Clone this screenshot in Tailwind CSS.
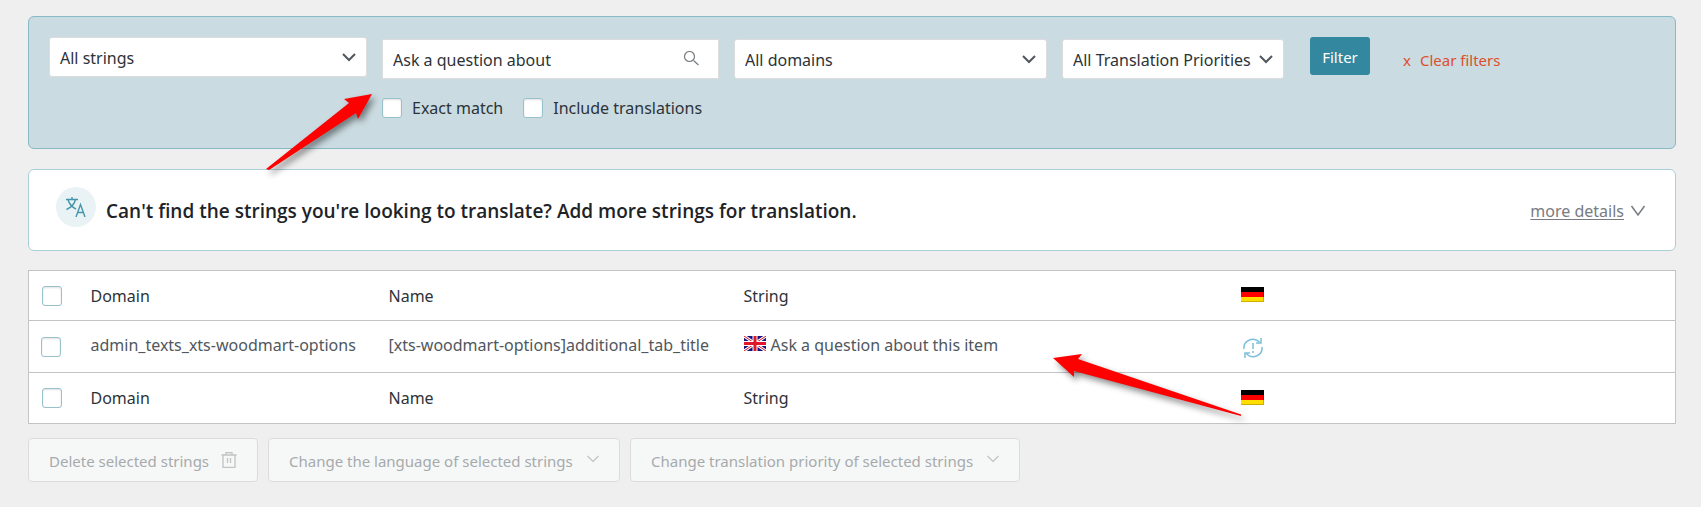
<!DOCTYPE html>
<html lang="en">
<head>
    <meta charset="UTF-8">
    <meta name="viewport" content="width=device-width, initial-scale=1.0">
    <title>String Translation</title>
    <script src="https://cdn.jsdelivr.net/npm/@tailwindcss/browser@4"></script>
</head>
<body class="relative min-h-screen overflow-x-hidden bg-[#efefef] pt-4 pr-[25px] pb-6 pl-7 font-['Noto_Sans',sans-serif] text-[16px] leading-6 text-[#2c3338]">
    <!-- FILTERS -->
    <form class="flex h-[133px] items-start rounded-md border border-[#87b9c6] bg-[#cadbe1] pt-5 pl-5">
        <div class="relative mr-[15px] w-[318px]">
            <select aria-label="Status" class="h-10 w-full appearance-none rounded-[3px] border border-[#dcdcde] bg-white pt-0.5 pl-[10px]">
                <option>All strings</option>
            </select>
            <svg class="pointer-events-none absolute top-3 right-2.5 size-4" viewBox="0 0 16 16" fill="none" stroke="#50575e" stroke-width="2"><path d="M2 5l6 6 6-6"/></svg>
        </div>

        <div class="mt-0.5 mr-[15px] w-[337px]">
            <div class="relative">
                <input type="text" aria-label="Search" value="Ask a question about" class="h-10 w-full border border-[#dcdcde] bg-white pt-0.5 pl-[10px]">
                <svg class="pointer-events-none absolute top-3 right-5 size-4" viewBox="0 0 16 16" fill="none" stroke="#787c82" stroke-width="1.200"><circle cx="6.500" cy="5.500" r="5"/><path d="M10.500 9.500l5 4.500"/></svg>
            </div>
            <div class="mt-[17px] flex whitespace-nowrap">
                <label class="mr-5 flex items-center gap-2.5">
                    <input type="checkbox" class="size-5 appearance-none rounded-[3px] border border-[#98c1cc] bg-white shadow-[inset_0_1px_2px_rgba(0,0,0,0.12)]">Exact match
                </label>
                <label class="flex items-center gap-2.5">
                    <input type="checkbox" class="size-5 appearance-none rounded-[3px] border border-[#98c1cc] bg-white shadow-[inset_0_1px_2px_rgba(0,0,0,0.12)]">Include translations
                </label>
            </div>
        </div>

        <div class="relative mt-0.5 mr-[15px] w-[313px]">
            <select aria-label="Domain" class="h-10 w-full appearance-none rounded-[3px] border border-[#dcdcde] bg-white pt-0.5 pl-[10px]">
                <option>All domains</option>
            </select>
            <svg class="pointer-events-none absolute top-3 right-2.5 size-4" viewBox="0 0 16 16" fill="none" stroke="#50575e" stroke-width="2"><path d="M2 5l6 6 6-6"/></svg>
        </div>

        <div class="relative mt-0.5 mr-[26px] w-[222px]">
            <select aria-label="Priority" class="h-10 w-full appearance-none rounded-[3px] border border-[#dcdcde] bg-white pt-0.5 pl-[10px]">
                <option>All Translation Priorities</option>
            </select>
            <svg class="pointer-events-none absolute top-3 right-2.5 size-4" viewBox="0 0 16 16" fill="none" stroke="#50575e" stroke-width="2"><path d="M2 5l6 6 6-6"/></svg>
        </div>

        <button type="submit" class="mr-[33px] h-[38px] w-[60px] rounded-[3px] bg-[#33879e] pt-0.5 text-[15px] text-white">Filter</button>
        <a href="#" class="mt-[11px] flex gap-[9px] whitespace-nowrap text-[15px] text-[#dd4f2c]"><span>x</span><span>Clear filters</span></a>
    </form>

    <!-- HELP -->
    <section class="mt-5 flex h-[82px] items-center rounded-md border border-[#a9d0d9] bg-white pt-0.5 pr-[29px] pl-[27px]">
        <div class="mr-2.5 mb-2 flex size-10 items-center justify-center rounded-full bg-[#e9f2f5]">
            <svg class="size-5" viewBox="0 0 20 20" fill="none" stroke="#4595aa" stroke-width="1.400"><path d="M0 2.500h12M6 0v2.500M2 2.500c1 4 4 7.500 8 9.500M9.500 2.500C8.500 7 5 10.500 0.500 12.500"/><path d="M10 20l4.500-12.500L19 20M11.500 15.500h6"/></svg>
        </div>
        <h2 class="flex-1 font-['Open_Sans',sans-serif] text-[19px] font-semibold text-[#1d2327]">Can't find the strings you're looking to translate? Add more strings for translation.</h2>
        <a href="#" class="flex items-center gap-1.5 text-[#787c82]"><span class="underline underline-offset-2">more details</span>
            <svg class="size-4" viewBox="0 0 16 16" fill="none" stroke="#787c82" stroke-width="1.500"><path d="M1.500 3l6.500 9 6.500-9"/></svg>
        </a>
    </section>

    <!-- STRINGS -->
    <table class="mt-[19px] w-full table-fixed border-collapse border border-[#c3c4c7] bg-white text-left">
        <colgroup>
            <col class="w-[52px]">
            <col class="w-[298px]">
            <col class="w-[355px]">
            <col class="w-[497px]">
            <col>
        </colgroup>
        <thead>
            <tr class="h-[50px] border-b border-[#c3c4c7]">
                <th class="pl-[13px]"><input type="checkbox" aria-label="Select all" class="block size-5 appearance-none rounded-[3px] border border-[#98c1cc] bg-white shadow-[inset_0_1px_2px_rgba(0,0,0,0.12)]"></th>
                <th class="pl-2.5 font-normal">Domain</th>
                <th class="pl-2.5 font-normal">Name</th>
                <th class="pl-2.5 font-normal">String</th>
                <th class="pl-2.5">
                    <svg class="mb-0.5 h-[15px] w-[23px]" viewBox="0 0 23 15" role="img" aria-label="German"><path fill="#000" d="M0 0h23v5H0z"/><path fill="#f00" d="M0 5h23v5H0z"/><path fill="#fd0" d="M0 10h23v5H0z"/><path fill="#000" fill-opacity=".2" d="M0 14h23v1H0zM22 5h1v9h-1z"/></svg>
                </th>
            </tr>
        </thead>
        <tbody>
            <tr class="h-[52px] border-b border-[#c3c4c7] text-[#50575e]">
                <td class="pl-3"><input type="checkbox" aria-label="Select string" class="block size-5 appearance-none rounded-[3px] border border-[#98c1cc] bg-white shadow-[inset_0_1px_2px_rgba(0,0,0,0.12)]"></td>
                <td class="pb-1 pl-2.5">admin_texts_xts-woodmart-options</td>
                <td class="pb-1 pl-2.5">[xts-woodmart-options]additional_tab_title</td>
                <td class="pb-1 pl-2.5">
                    <div class="flex items-center gap-[5px]">
                        <svg class="mb-0.5 h-[15px] w-[22px]" viewBox="0 0 22 15" role="img" aria-label="English"><path fill="#15157d" d="M0 0h22v15H0z"/><path stroke="#fff" stroke-width="3" d="M0 0l22 15M22 0L0 15"/><path stroke="#e0162b" stroke-width="1" d="M0 0l22 15M22 0L0 15"/><path stroke="#fff" stroke-width="5" d="M11 0v15M0 7.500h22"/><path stroke="#e0162b" stroke-width="3" d="M11 0v15M0 7.500h22"/></svg>
                        Ask a question about this item
                    </div>
                </td>
                <td class="pl-3">
                    <a href="#" class="block w-5" aria-label="Needs update">
                        <svg class="mt-0.5 size-5" viewBox="0 0 20 20" fill="none" stroke="#7dbfdc" stroke-width="1.500"><path d="M1 11C0 3 10-2 16.500 4M18 0v5h-5M19 9c1 8-9 13-15.500 7M2 20v-5h5M10 5v6M10 13v2"/></svg>
                    </a>
                </td>
            </tr>
        </tbody>
        <tfoot>
            <tr class="h-[51px]">
                <th class="pl-[13px]"><input type="checkbox" aria-label="Select all" class="block size-5 appearance-none rounded-[3px] border border-[#98c1cc] bg-white shadow-[inset_0_1px_2px_rgba(0,0,0,0.12)]"></th>
                <th class="pl-2.5 font-normal">Domain</th>
                <th class="pl-2.5 font-normal">Name</th>
                <th class="pl-2.5 font-normal">String</th>
                <th class="pl-2.5">
                    <svg class="mb-0.5 h-[15px] w-[23px]" viewBox="0 0 23 15" role="img" aria-label="German"><path fill="#000" d="M0 0h23v5H0z"/><path fill="#f00" d="M0 5h23v5H0z"/><path fill="#fd0" d="M0 10h23v5H0z"/><path fill="#000" fill-opacity=".2" d="M0 14h23v1H0zM22 5h1v9h-1z"/></svg>
                </th>
            </tr>
        </tfoot>
    </table>

    <!-- BULK ACTIONS -->
    <div class="mt-[14px] flex gap-2.5 text-[15px] text-[#a7aaad]">
        <button type="button" disabled class="flex h-11 w-[230px] items-center justify-between rounded border border-[#dcdcde] bg-[#f6f8f7] px-5 pt-0.5">Delete selected strings
            <svg class="mb-0.5 size-4" viewBox="0 0 16 16" fill="none" stroke="#c0c2c4" stroke-width="1.300"><path d="M0.500 3h15M2 3v12.300h12V3M5 2.500V0.700h6v1.800M6.500 6v5M9.500 6v5"/></svg>
        </button>
        <button type="button" disabled class="flex h-11 w-[352px] items-center justify-between rounded border border-[#dcdcde] bg-[#f6f8f7] px-5 pt-0.5">Change the language of selected strings
            <svg class="mb-1 h-2 w-3" viewBox="0 0 12 8" fill="none" stroke="#c0c2c4" stroke-width="1.200"><path d="M0.500 1l5.500 5.500L11.500 1"/></svg>
        </button>
        <button type="button" disabled class="flex h-11 w-[390px] items-center justify-between rounded border border-[#dcdcde] bg-[#f6f8f7] px-5 pt-0.5">Change translation priority of selected strings
            <svg class="mb-1 h-2 w-3" viewBox="0 0 12 8" fill="none" stroke="#c0c2c4" stroke-width="1.200"><path d="M0.500 1l5.500 5.500L11.500 1"/></svg>
        </button>
    </div>

    <!-- POINTERS -->
    <svg class="pointer-events-none absolute top-[94px] left-[266px] h-[76px] w-[106px] overflow-visible drop-shadow-[3px_4px_3px_rgba(0,0,0,0.45)]" viewBox="266 94 106 76"><path fill="#f00" d="M266 169L349 103L344 99L372 94L358 119L356 113L269 170z"/></svg>
    <svg class="pointer-events-none absolute top-[354px] left-[1053px] h-[62px] w-[188px] overflow-visible drop-shadow-[3px_4px_3px_rgba(0,0,0,0.45)]" viewBox="1053 354 188 62"><path fill="#f00" d="M1053 358L1082 354L1078 359L1241 414.500V416L1074 371V377z"/></svg>
</body>
</html>
